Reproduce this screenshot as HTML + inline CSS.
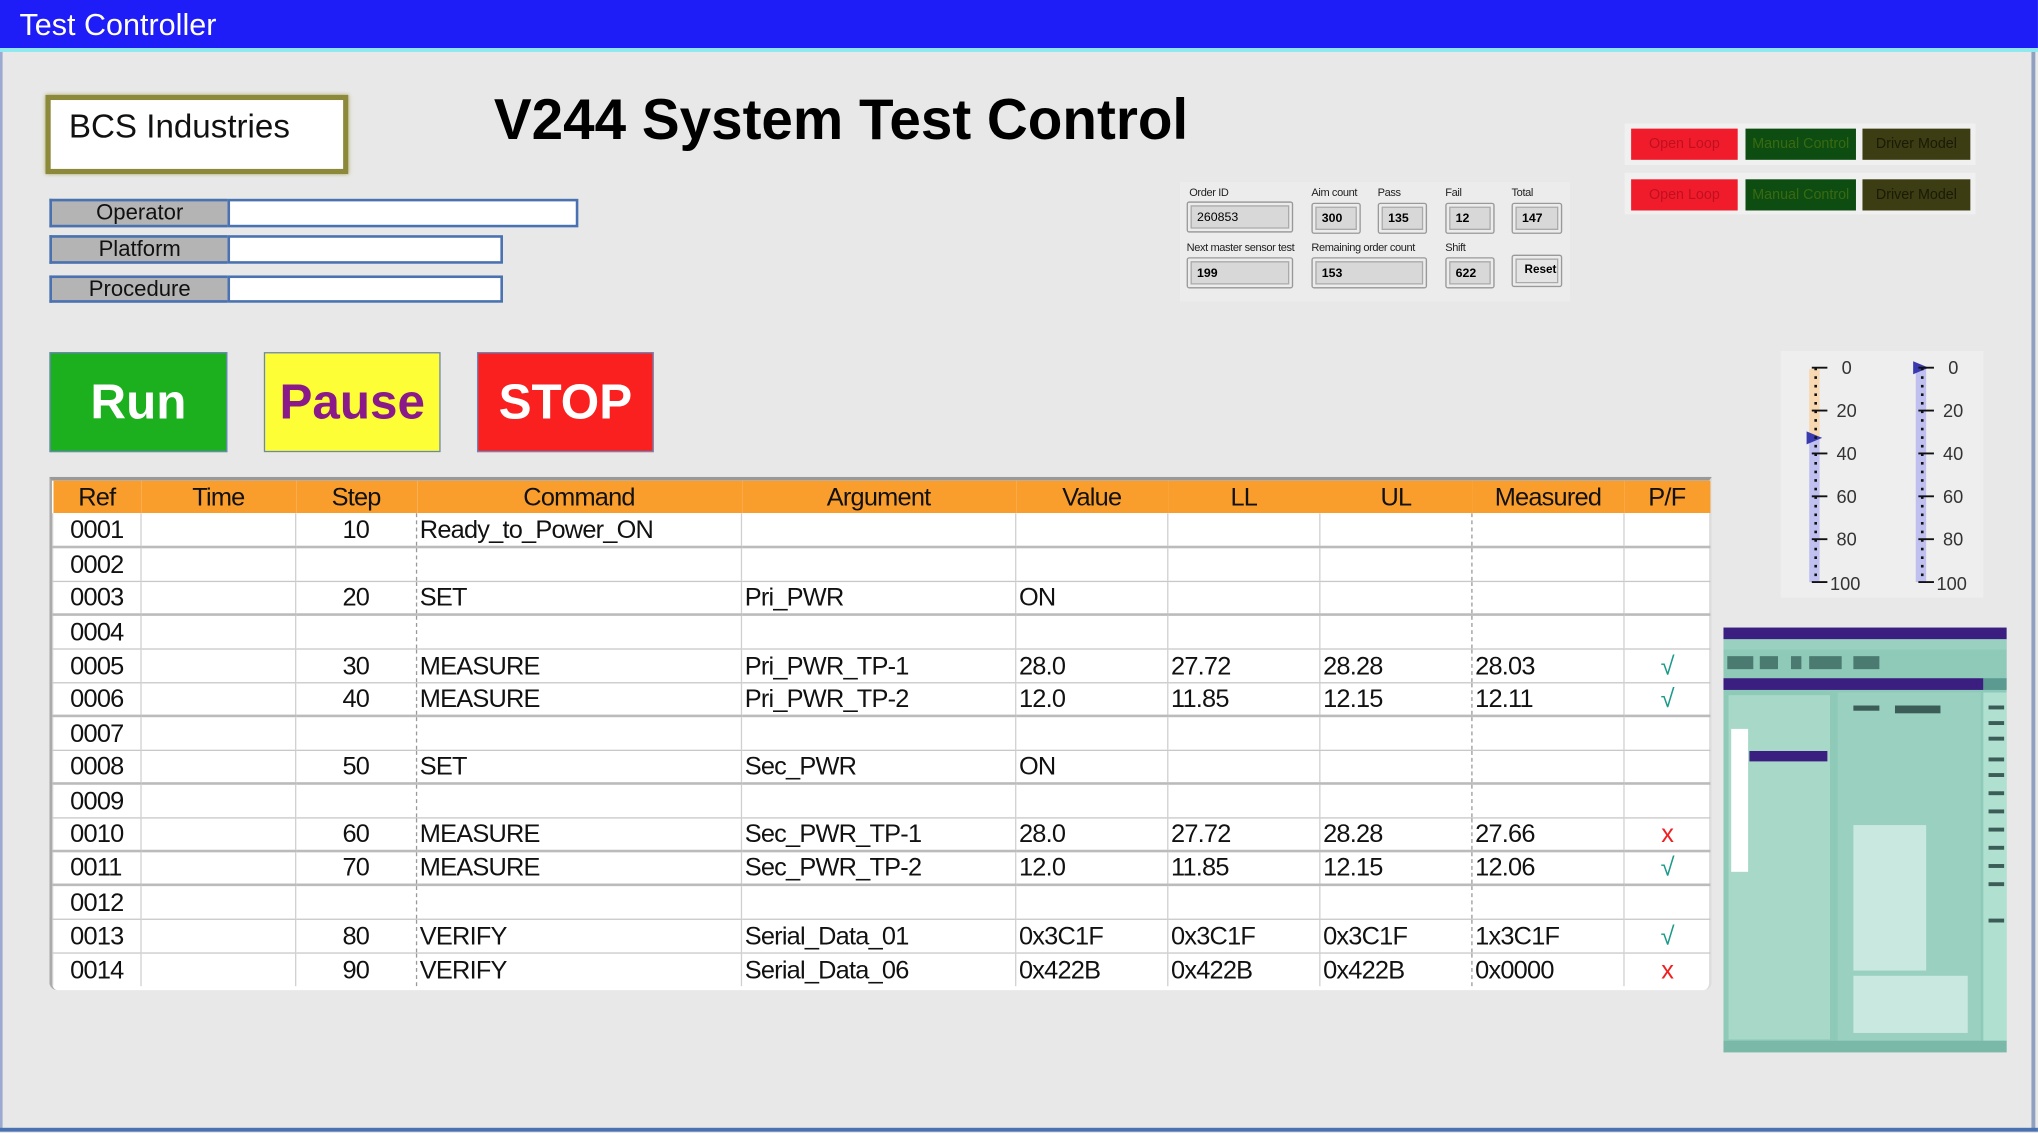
<!DOCTYPE html>
<html><head><meta charset="utf-8">
<style>
*{margin:0;padding:0;box-sizing:border-box}
html,body{width:2038px;height:1133px;overflow:hidden;background:#e8e8e8}
#w{position:absolute;left:0;top:0;width:1568px;height:872px;transform:scale(1.2997,1.2993);transform-origin:0 0;font-family:"Liberation Sans",Arial,sans-serif;background:#e8e8e8}
.a{position:absolute}
.nar{font-family:"Liberation Sans Narrow","Liberation Sans",sans-serif}
.lbl{background:#b4b4b4;border:2px solid #4a72b0;border-right:none;font-size:17px;text-align:center;line-height:18px;color:#111}
.inp{background:#fff;border:2px solid #4a72b0}
.btn{font-weight:bold;font-size:38px;text-align:center;line-height:76px;border:1px solid #6a86b8}
table{border-collapse:collapse;table-layout:fixed}
td{height:26px;font-size:19.5px;letter-spacing:-0.6px;line-height:24px;border-left:1px solid #d0d0d0;border-bottom:1px solid #c8c8c8;padding:0 2px;white-space:nowrap;overflow:hidden;color:#111;vertical-align:bottom}
tr.h td{background:#f99d2c;text-align:center;height:25px;border:none}
tr.t td{border-bottom:2px solid #bbb}
td.d{border-left:1px dashed #999}
.ok{color:#1a9a8a;text-align:center}
.x{color:#f02020;text-align:center}
.sm{font-size:8.5px;color:#222;letter-spacing:-.3px}
.f{background:#d8d8d8;border:1px solid #999;box-shadow:inset 0 0 0 2px #ececec,inset 0 0 0 3px #aaa;font-size:9.5px;font-weight:bold;padding:6px 0 0 7px;border-radius:2px}
.mb{height:24px;font-size:11px;text-align:center;line-height:24px}
</style></head><body><div id="w">
<div class="a" style="left:0;top:0;width:1568px;height:37px;background:#1e1cf7"></div>
<div class="a" style="left:0;top:37px;width:1568px;height:3px;background:#8ee8f0"></div>
<div class="a" style="left:15px;top:6px;color:#fff;font-size:23.5px">Test Controller</div>
<div class="a" style="left:0;top:40px;width:2px;height:830px;background:#9aaad0"></div>
<div class="a" style="left:1563px;top:40px;width:3px;height:830px;background:#90a0c0"></div>
<div class="a" style="left:0;top:868px;width:1568px;height:3px;background:#4a72b0"></div>

<div class="a" style="left:35px;top:73px;width:233px;height:61px;background:#fff;border:4px solid #8c8a3a;box-shadow:0 0 3px #aaa860"></div>
<div class="a" style="left:53px;top:84px;font-size:25.5px;color:#111">BCS Industries</div>
<div class="a" style="left:380px;top:68px;font-size:44px;font-weight:bold;color:#000;transform:scaleX(0.99);transform-origin:0 0;white-space:nowrap">V244 System Test Control</div>

<div class="a lbl" style="left:38px;top:153px;width:137px;height:22px">Operator</div>
<div class="a inp" style="left:175px;top:153px;width:270px;height:22px"></div>
<div class="a lbl" style="left:38px;top:181px;width:137px;height:22px">Platform</div>
<div class="a inp" style="left:175px;top:181px;width:212px;height:22px"></div>
<div class="a lbl" style="left:38px;top:212px;width:137px;height:21px">Procedure</div>
<div class="a inp" style="left:175px;top:212px;width:212px;height:21px"></div>

<div class="a btn" style="left:38px;top:271px;width:137px;height:77px;background:#1cb01f;color:#fff">Run</div>
<div class="a btn" style="left:203px;top:271px;width:136px;height:77px;background:#fefe36;color:#8a1a8a">Pause</div>
<div class="a btn" style="left:367px;top:271px;width:136px;height:77px;background:#fa2020;color:#fff">STOP</div>

<div class="a" style="left:38px;top:367px;width:1279px;height:395px;background:#fff;border-top:3px solid #999;border-left:2px solid #aaa;border-right:2px solid #ddd;border-radius:0 0 6px 6px"></div>
<table class="a nar" style="left:40px;top:370px;width:1275px">
<colgroup><col style="width:68px"><col style="width:119px"><col style="width:93px"><col style="width:250px"><col style="width:211px"><col style="width:117px"><col style="width:117px"><col style="width:117px"><col style="width:117px"><col style="width:66px"></colgroup>
<tr class="h"><td>Ref</td><td>Time</td><td>Step</td><td>Command</td><td>Argument</td><td>Value</td><td>LL</td><td>UL</td><td>Measured</td><td>P/F</td></tr>
<tr class="t"><td style="padding-left:13px">0001</td><td></td><td style="text-align:right;padding-right:36px">10</td><td class="d">Ready_to_Power_ON</td><td></td><td></td><td></td><td></td><td class="d"></td><td></td></tr>
<tr><td style="padding-left:13px">0002</td><td></td><td></td><td class="d"></td><td></td><td></td><td></td><td></td><td class="d"></td><td></td></tr>
<tr class="t"><td style="padding-left:13px">0003</td><td></td><td style="text-align:right;padding-right:36px">20</td><td class="d">SET</td><td>Pri_PWR</td><td>ON</td><td></td><td></td><td class="d"></td><td></td></tr>
<tr><td style="padding-left:13px">0004</td><td></td><td></td><td class="d"></td><td></td><td></td><td></td><td></td><td class="d"></td><td></td></tr>
<tr><td style="padding-left:13px">0005</td><td></td><td style="text-align:right;padding-right:36px">30</td><td class="d">MEASURE</td><td>Pri_PWR_TP-1</td><td>28.0</td><td>27.72</td><td>28.28</td><td class="d">28.03</td><td class="ok">√</td></tr>
<tr class="t"><td style="padding-left:13px">0006</td><td></td><td style="text-align:right;padding-right:36px">40</td><td class="d">MEASURE</td><td>Pri_PWR_TP-2</td><td>12.0</td><td>11.85</td><td>12.15</td><td class="d">12.11</td><td class="ok">√</td></tr>
<tr><td style="padding-left:13px">0007</td><td></td><td></td><td class="d"></td><td></td><td></td><td></td><td></td><td class="d"></td><td></td></tr>
<tr class="t"><td style="padding-left:13px">0008</td><td></td><td style="text-align:right;padding-right:36px">50</td><td class="d">SET</td><td>Sec_PWR</td><td>ON</td><td></td><td></td><td class="d"></td><td></td></tr>
<tr><td style="padding-left:13px">0009</td><td></td><td></td><td class="d"></td><td></td><td></td><td></td><td></td><td class="d"></td><td></td></tr>
<tr class="t"><td style="padding-left:13px">0010</td><td></td><td style="text-align:right;padding-right:36px">60</td><td class="d">MEASURE</td><td>Sec_PWR_TP-1</td><td>28.0</td><td>27.72</td><td>28.28</td><td class="d">27.66</td><td class="x">x</td></tr>
<tr class="t"><td style="padding-left:13px">0011</td><td></td><td style="text-align:right;padding-right:36px">70</td><td class="d">MEASURE</td><td>Sec_PWR_TP-2</td><td>12.0</td><td>11.85</td><td>12.15</td><td class="d">12.06</td><td class="ok">√</td></tr>
<tr><td style="padding-left:13px">0012</td><td></td><td></td><td class="d"></td><td></td><td></td><td></td><td></td><td class="d"></td><td></td></tr>
<tr><td style="padding-left:13px">0013</td><td></td><td style="text-align:right;padding-right:36px">80</td><td class="d">VERIFY</td><td>Serial_Data_01</td><td>0x3C1F</td><td>0x3C1F</td><td>0x3C1F</td><td class="d">1x3C1F</td><td class="ok">√</td></tr>
<tr><td style="padding-left:13px;border-bottom:none">0014</td><td style="border-bottom:none"></td><td style="text-align:right;padding-right:36px;border-bottom:none">90</td><td class="d" style="border-bottom:none">VERIFY</td><td style="border-bottom:none">Serial_Data_06</td><td style="border-bottom:none">0x422B</td><td style="border-bottom:none">0x422B</td><td style="border-bottom:none">0x422B</td><td class="d" style="border-bottom:none">0x0000</td><td class="x" style="border-bottom:none">x</td></tr>
</table>

<div class="a" style="left:908px;top:140px;width:300px;height:92px;background:#ececec"></div>
<div class="a sm" style="left:915px;top:143px">Order ID</div>
<div class="a sm" style="left:1009px;top:143px">Aim count</div>
<div class="a sm" style="left:1060px;top:143px">Pass</div>
<div class="a sm" style="left:1112px;top:143px">Fail</div>
<div class="a sm" style="left:1163px;top:143px">Total</div>
<div class="a f" style="left:913px;top:155px;width:82px;height:24px;font-weight:normal">260853</div>
<div class="a f" style="left:1009px;top:156px;width:38px;height:24px">300</div>
<div class="a f" style="left:1060px;top:156px;width:38px;height:24px">135</div>
<div class="a f" style="left:1112px;top:156px;width:38px;height:24px">12</div>
<div class="a f" style="left:1163px;top:156px;width:39px;height:24px">147</div>
<div class="a sm" style="left:913px;top:185px">Next master sensor test</div>
<div class="a sm" style="left:1009px;top:185px">Remaining order count</div>
<div class="a sm" style="left:1112px;top:185px">Shift</div>
<div class="a f" style="left:913px;top:198px;width:82px;height:24px">199</div>
<div class="a f" style="left:1009px;top:198px;width:89px;height:24px">153</div>
<div class="a f" style="left:1112px;top:198px;width:38px;height:24px">622</div>
<div class="a f" style="left:1163px;top:196px;width:39px;height:25px;background:#e4e4e4;padding:5px 0 0 9px;font-size:9px">Reset</div>

<div class="a" style="left:1250px;top:95px;width:270px;height:32px;background:#f0f0f0"></div>
<div class="a" style="left:1250px;top:133px;width:270px;height:32px;background:#f0f0f0"></div>
<div class="a mb" style="left:1255px;top:99px;width:82px;background:#f01c2c;color:#c01020">Open Loop</div>
<div class="a mb" style="left:1343px;top:99px;width:85px;background:#0e4d12;color:#3a6a10">Manual Control</div>
<div class="a mb" style="left:1433px;top:99px;width:83px;background:#3c3d12;color:#1a1a08">Driver Model</div>
<div class="a mb" style="left:1255px;top:138px;width:82px;background:#f01c2c;color:#c01020">Open Loop</div>
<div class="a mb" style="left:1343px;top:138px;width:85px;background:#0e4d12;color:#3a6a10">Manual Control</div>
<div class="a mb" style="left:1433px;top:138px;width:83px;background:#3c3d12;color:#1a1a08">Driver Model</div>

<svg class="a" style="left:1370px;top:270px" width="156" height="190" viewBox="0 0 156 190">
<rect width="156" height="190" fill="#eeeeee"/>
<rect x="22" y="14" width="8" height="52" fill="#f8d8b0"/>
<rect x="22" y="66" width="8" height="112" fill="#c0c0f0"/>
<rect x="104" y="13" width="8" height="165" fill="#c0c0f0"/>
<polygon points="20,62 32,67 20,72" fill="#3a3ab0"/>
<polygon points="102,8 114,13 102,18" fill="#3a3ab0"/>
<g stroke="#111" stroke-width="1.5">
<path d="M24 13h12M24 46h12M24 79h12M24 112h12M24 145h12M24 178h12"/>
<path d="M106 13h12M106 46h12M106 79h12M106 112h12M106 145h12M106 178h12"/>
</g>
<g stroke="#111" stroke-width="2" stroke-dasharray="2,4.6">
<path d="M27 13v165M109 13v165"/>
</g>
<g font-family="Liberation Sans,sans-serif" font-size="14" fill="#333">
<text x="47" y="18">0</text><text x="43" y="51">20</text><text x="43" y="84">40</text><text x="43" y="117">60</text><text x="43" y="150">80</text><text x="38" y="184">100</text>
<text x="129" y="18">0</text><text x="125" y="51">20</text><text x="125" y="84">40</text><text x="125" y="117">60</text><text x="125" y="150">80</text><text x="120" y="184">100</text>
</g>
</svg>

<svg class="a" style="left:1326px;top:483px" width="218" height="327" viewBox="0 0 218 327">
<rect width="218" height="327" fill="#8fcab8"/>
<rect width="218" height="9" fill="#3a1e80"/>
<rect x="0" y="9" width="218" height="8" fill="#9ad0c0"/>
<rect x="0" y="17" width="218" height="22" fill="#8fcab8"/>
<g fill="#4a7a70"><rect x="3" y="22" width="20" height="10"/><rect x="28" y="22" width="14" height="10"/><rect x="52" y="22" width="8" height="10"/><rect x="66" y="22" width="25" height="10"/><rect x="100" y="22" width="20" height="10"/></g>
<rect x="0" y="39" width="200" height="9" fill="#3a1e80"/>
<rect x="200" y="39" width="18" height="9" fill="#5a9a90"/>
<rect x="4" y="52" width="78" height="265" fill="#a8d8c8"/>
<rect x="6" y="78" width="13" height="110" fill="#ffffff"/>
<rect x="20" y="95" width="60" height="8" fill="#3a1e80"/>
<rect x="88" y="50" width="110" height="268" fill="#9ad0c0"/>
<rect x="100" y="152" width="56" height="112" fill="#c8e8e0"/>
<rect x="100" y="268" width="88" height="44" fill="#c8e8e0"/>
<rect x="200" y="50" width="18" height="268" fill="#b0e0d0"/>
<g fill="#3c5c58"><rect x="100" y="60" width="20" height="4"/><rect x="132" y="60" width="35" height="6"/><rect x="204" y="60" width="12" height="3"/><rect x="204" y="72" width="12" height="3"/><rect x="204" y="84" width="12" height="3"/><rect x="204" y="100" width="12" height="3"/><rect x="204" y="112" width="12" height="3"/><rect x="204" y="126" width="12" height="3"/><rect x="204" y="140" width="12" height="3"/><rect x="204" y="154" width="12" height="3"/><rect x="204" y="168" width="12" height="3"/><rect x="204" y="182" width="12" height="3"/><rect x="204" y="196" width="12" height="3"/><rect x="204" y="224" width="12" height="3"/></g>
<rect x="0" y="318" width="218" height="9" fill="#7ab8a8"/>
</svg>
</div></body></html>
